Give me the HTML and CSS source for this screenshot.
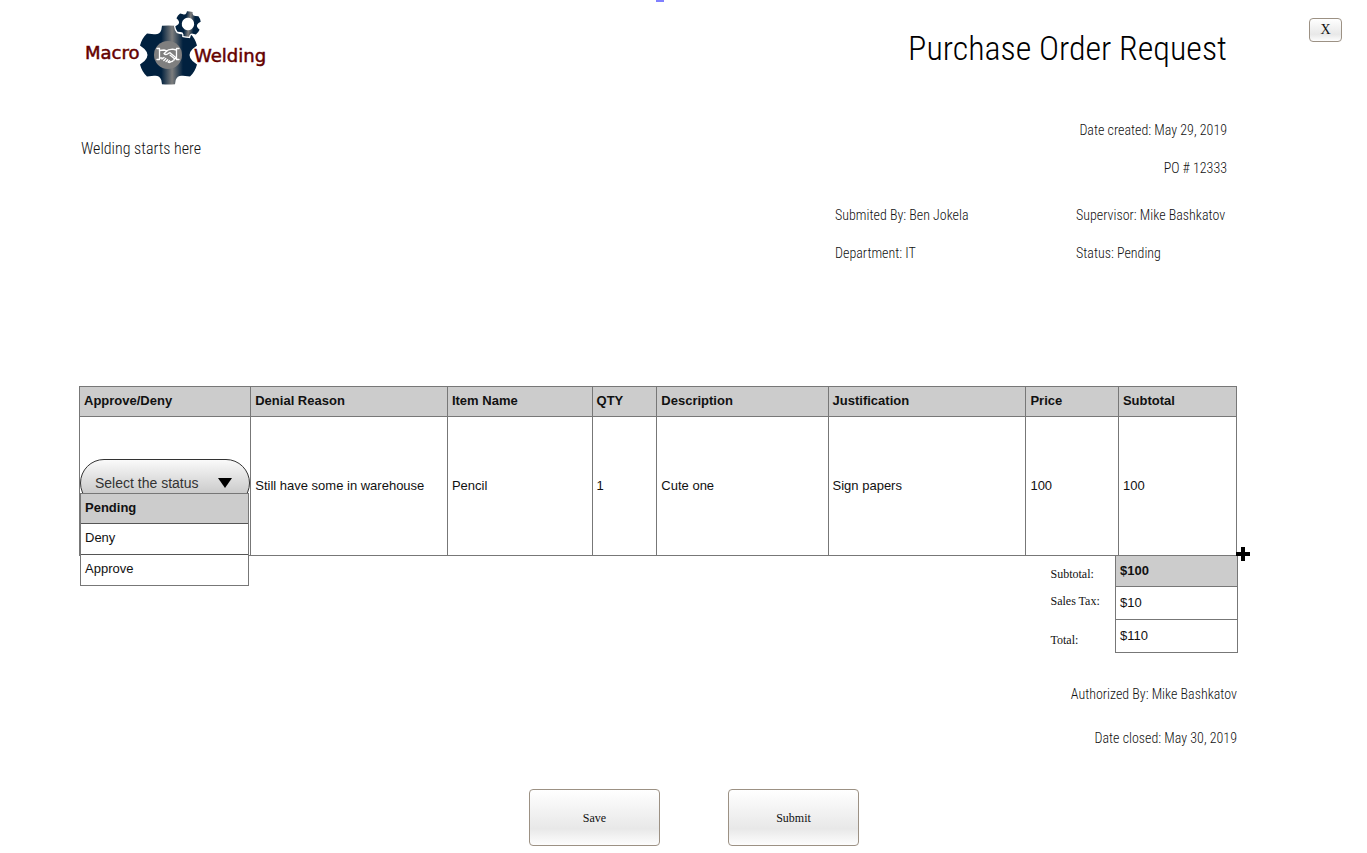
FILE: index.html
```
<!DOCTYPE html>
<html lang="en">
<head>
<meta charset="utf-8">
<title>Purchase Order Request</title>
<link rel="stylesheet" href="styles.css">
</head>
<body>
<div class="page">
  <span class="marker"></span>
  <main class="order">
    <header class="top">
      <svg class="logo" viewBox="79 8 190 80" role="img" aria-label="Macro Welding">
        <defs>
          <linearGradient id="steel" gradientUnits="userSpaceOnUse" x1="-30" y1="0" x2="30" y2="0">
            <stop offset="0.38" stop-color="#01213f"/>
            <stop offset="0.56" stop-color="#7d7d7d"/>
            <stop offset="0.74" stop-color="#01213f"/>
          </linearGradient>
          <path id="cog" d="M-6.5-29.2Q0-30 6.5-29.2L7.2-25Q9-20 14.5-20.8L21.5-21.5Q26.5-17 28.5-9.5L24-6Q18 0 24 6L28.5 9.5Q26.5 17 21.5 21.5L14.5 20.8Q9 20 7.2 25L6.5 29.2Q0 30 -6.5 29.2L-7.2 25Q-9 20-14.5 20.8L-21.5 21.5Q-26.5 17-28.5 9.5L-24 6Q-18 0-24-6L-28.5-9.5Q-26.5-17-21.5-21.5L-14.5-20.8Q-9-20-7.2-25Z"/>
        </defs>
        <use href="#cog" x="168.500" y="55" fill="url(#steel)"/>
        <circle cx="168" cy="55" r="14" fill="#7f7f7f"/>
        <g fill="none" stroke="#fff" stroke-width="1.300" stroke-linecap="round" stroke-linejoin="round">
          <path d="M157 48.500h2.500v11h-2.500M179 48.500h-2.500v11h2.500"/>
          <path d="M159.500 50.500l4.500-.5 3 .8M176.500 50l-4-.8-4 .6-4.500 3.700q1.500 2 4 .2l2-1 6 5"/>
          <path d="M159.500 58l2.500 0M176.500 58.500l-2 .2M162 59l2-1.500M163.800 60.500l2-2M166 61.500l1.700-1.700M168.200 62l1.200-1.200M168 62q2 1.200 2.800-.6 1.600.6 2.200-1 1.500 0 1.500-1.700l-4.500-3.600"/>
        </g>
        <g transform="translate(188 24) rotate(8) scale(0.430)">
          <use href="#cog" fill="#fff" stroke="#fff" stroke-width="6"/>
          <use href="#cog" fill="url(#steel)"/>
          <circle r="14.500" fill="#fff"/>
        </g>
        <text class="logo-text" x="85" y="59">Macro</text>
        <text class="logo-text" x="194" y="62">Welding</text>
      </svg>
      <h1 class="title">Purchase Order Request</h1>
    </header>

    <section class="intro">
      <p class="tagline">Welding starts here</p>
      <div class="reference">
        <p>Date created: May 29, 2019</p>
        <p>PO # 12333</p>
      </div>
    </section>

    <section class="details">
      <p>Submited By: Ben Jokela</p>
      <p>Supervisor: Mike Bashkatov</p>
      <p>Department: IT</p>
      <p>Status: Pending</p>
    </section>

    <div class="items-wrap">
      <table class="items">
        <colgroup>
          <col class="c-status"><col class="c-reason"><col class="c-name"><col class="c-qty">
          <col class="c-desc"><col class="c-just"><col class="c-price"><col class="c-sub">
        </colgroup>
        <thead>
          <tr><th>Approve/Deny</th><th>Denial Reason</th><th>Item Name</th><th>QTY</th><th>Description</th><th>Justification</th><th>Price</th><th>Subtotal</th></tr>
        </thead>
        <tbody>
          <tr>
            <td class="status-cell">
              <div class="status">
                <select class="status-select" aria-label="Approve or deny">
                  <option>Select the status</option>
                  <option>Pending</option>
                  <option>Deny</option>
                  <option>Approve</option>
                </select>
                <svg class="arrow" viewBox="0 0 14 10" aria-hidden="true"><path d="M0 0h14L7 10z"/></svg>
                <ul class="status-list" role="listbox" aria-label="Status">
                  <li role="option" aria-selected="true">Pending</li>
                  <li role="option" aria-selected="false">Deny</li>
                  <li role="option" aria-selected="false">Approve</li>
                </ul>
              </div>
            </td>
            <td>Still have some in warehouse</td><td>Pencil</td><td>1</td><td>Cute one</td><td>Sign papers</td><td>100</td><td>100</td>
          </tr>
        </tbody>
      </table>
      <button class="add-row" type="button" aria-label="Add row"><svg viewBox="0 0 14 14"><path d="M5 0h4v5h5v4H9v5H5V9H0V5h5z"/></svg></button>
    </div>

    <table class="totals">
      <tr class="sum"><th scope="row">Subtotal:</th><td>$100</td></tr>
      <tr><th scope="row">Sales Tax:</th><td>$10</td></tr>
      <tr><th scope="row">Total:</th><td>$110</td></tr>
    </table>

    <section class="closing">
      <p>Authorized By: Mike Bashkatov</p>
      <p>Date closed: May 30, 2019</p>
    </section>

    <div class="actions">
      <button class="btn" type="button">Save</button>
      <button class="btn" type="submit">Submit</button>
    </div>
  </main>
  <aside class="side">
    <button class="close" type="button">X</button>
  </aside>
</div>
</body>
</html>
```
FILE: styles.css
```
* { box-sizing: border-box; }
body {
  margin: 0;
  background: #fff;
  color: #111;
  font: 300 14px/20px "Agency FB", "Roboto Condensed", "Liberation Sans Narrow", "Liberation Sans", sans-serif;
}
p, h1, ul { margin: 0; padding: 0; }
.page { position: relative; display: flex; }
.marker {
  position: absolute;
  top: 0;
  left: 48%;
  width: 8px;
  height: 2px;
  background: #8080ff;
}
.order { flex: 1; min-width: 0; padding: 8px 0 6px 79px; }
.side { width: 130px; padding: 18px 25px 0 0; text-align: right; }

.top { display: flex; justify-content: space-between; align-items: center; padding-right: 10px; }
.logo { width: 190px; height: 80px; }
.logo-text { font: 18px "DejaVu Sans", sans-serif; fill: #640000; stroke: #640000; stroke-width: 0.5px; }
.title { font-size: 34px; line-height: 40px; font-weight: 300; color: #000; }

.intro { display: flex; justify-content: space-between; align-items: center; margin-top: 32px; padding-right: 10px; }
.tagline { padding-left: 2px; font-size: 16px; }
.reference { display: grid; gap: 18px; text-align: right; }
.details {
  display: grid;
  grid-template-columns: 241px 161px;
  justify-content: end;
  row-gap: 18px;
  margin-top: 27px;
  white-space: nowrap;
}

.items-wrap { position: relative; margin-top: 123px; }
.items, .totals { border-collapse: collapse; font: 13px/16px "Liberation Sans", sans-serif; }
.items { width: 100%; table-layout: fixed; }
.items th, .items td { border: 1px solid #777; padding: 0 4px; text-align: left; }
.items th { height: 30px; padding-bottom: 2px; background: #ccc; color: #111; }
.items td { height: 139px; }
.c-status, .c-desc { width: 14.8%; }
.c-reason { width: 17%; }
.c-name { width: 12.5%; }
.c-qty { width: 5.6%; }
.c-just { width: 17.1%; }
.c-price { width: 8%; }
.items .status-cell { padding: 42px 0 0; vertical-align: top; }
.status { position: relative; }
.status-select {
  appearance: none;
  display: block;
  width: 100%;
  height: 48px;
  padding: 0 30px 0 14px;
  border: 1px solid #333;
  border-radius: 24px;
  background: linear-gradient(#fafafa, #ccc 70%);
  color: #333;
  font: 14px/20px "Liberation Sans", sans-serif;
}
.arrow { position: absolute; top: 19px; right: 18px; width: 14px; height: 10px; }
.status-list {
  position: absolute;
  top: 34px;
  left: 0;
  right: 1px;
  list-style: none;
  border: 1px solid #777;
  background: #fff;
}
.status-list li { height: 31px; padding: 6px 4px; }
.status-list li + li { border-top: 1px solid #555; }
.status-list li[aria-selected="true"] { height: 29px; background: #ccc; color: #111; font-weight: 700; }

.add-row {
  position: absolute;
  right: -13px;
  bottom: -5px;
  width: 14px;
  height: 14px;
  padding: 0;
  border: 0;
  background: none;
}
.add-row svg { display: block; }

.totals { margin: -1px -1px 0 auto; }
.totals th {
  width: 65px;
  padding: 0 0 6px;
  font: 12px/14px "Liberation Serif", serif;
  text-align: left;
  vertical-align: bottom;
}
.totals tr:nth-child(2) th { padding: 0 0 4px; vertical-align: middle; }
.totals td { width: 122px; height: 33px; padding: 0 4px; border: 1px solid #777; }
.totals .sum td { height: 31px; background: #ccc; color: #111; font-weight: 700; }

.closing { display: grid; gap: 24px; margin-top: 31px; text-align: right; }
.actions { display: flex; justify-content: center; gap: 68px; margin-top: 41px; padding-left: 72px; }
.btn, .close {
  border: 1px solid #9c9184;
  border-radius: 4px;
  background: linear-gradient(#fff, #e8e8e8 70%, #fdfdfd);
  color: #111;
  font: 12px/14px "Liberation Serif", serif;
}
.btn { width: 131px; height: 57px; }
.close { width: 33px; height: 24px; padding: 0; font-size: 14px; }
```
